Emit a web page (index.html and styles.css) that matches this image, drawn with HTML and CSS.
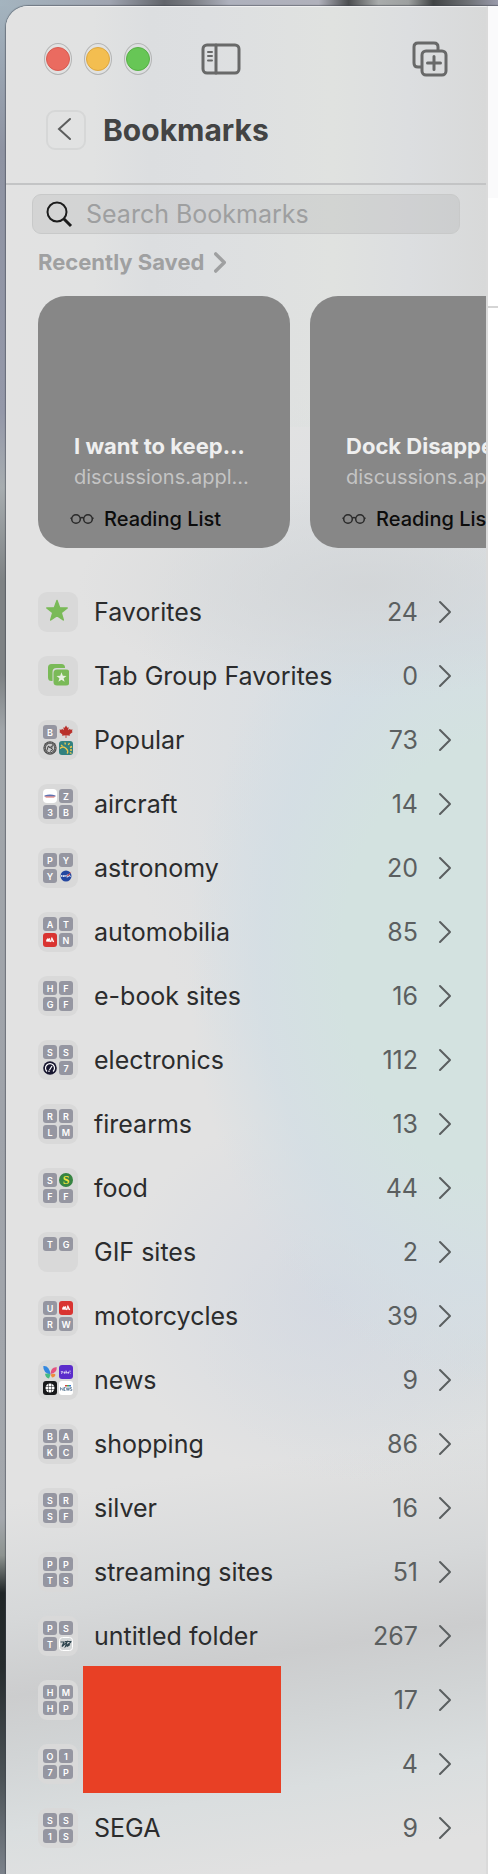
FILE: index.html
```html
<!DOCTYPE html>
<html lang="en">

<head>
  <meta charset="UTF-8">
  <meta name="viewport" content="width=device-width, initial-scale=1.0">
  <title>Bookmarks</title>
  <link rel="stylesheet" href="styles.css">
</head>

<body>
  <!-- shared icons -->
  <svg class="sprite" aria-hidden="true">
    <symbol id="chevron" viewBox="0 0 14 24"><path d="M2 2l10 10L2 22" /></symbol>
    <symbol id="glasses" viewBox="0 0 24 12">
      <circle cx="6" cy="6" r="4.3" /><circle cx="18" cy="6" r="4.3" />
      <path d="M10.2 5.2q1.8-1.2 3.6 0M.5 5l1.2.5M23.5 5l-1.2.5" />
    </symbol>
    <symbol id="ca-logo" viewBox="0 0 14 14">
      <rect width="14" height="14" rx="3" fill="#d93431" />
      <path d="M3 6.8l1.1-.5.5-1.4.9.8 1.6-.8-.4 4.1-1.8-.5-1.3.4z" fill="#fff" />
      <path d="M7.2 9l1.7-4 1.8 4M8 8h2" fill="none" stroke="#fff" stroke-width="1.1" />
    </symbol>
  </svg>

  <div class="window">
    <aside class="sidebar">
      <header class="header">
        <div class="toolbar">
          <div class="lights">
            <button class="light red" aria-label="Close"></button>
            <button class="light yellow" aria-label="Minimize"></button>
            <button class="light green" aria-label="Zoom"></button>
          </div>
          <button class="tool" aria-label="Toggle sidebar">
            <svg width="40" height="32" viewBox="0 0 40 32">
              <rect x="2" y="2" width="36" height="28" rx="4" />
              <path d="M15 2v28" />
              <path class="thin" d="M7 9h4M7 13h4M7 17.500h4" />
            </svg>
          </button>
          <button class="tool new-tab" aria-label="New tab group">
            <svg width="36" height="36" viewBox="0 0 36 36">
              <path d="M9 26H6q-4 0-4-4V6q0-4 4-4h16q4 0 4 4v3" />
              <rect x="10" y="10" width="24" height="24" rx="4" />
              <path d="M22 15.500v13M15.500 22h13" />
            </svg>
          </button>
        </div>
        <div class="title-row">
          <button class="back" aria-label="Back">
            <svg width="14" height="24" viewBox="0 0 14 24"><path d="M13 2L2 12l11 10" /></svg>
          </button>
          <h1>Bookmarks</h1>
        </div>
      </header>

      <div class="search">
        <label for="searchInput" aria-label="Search Bookmarks">
          <svg width="28" height="28" viewBox="0 0 28 28">
            <circle cx="12" cy="12" r="9.500" /><path d="M19 19l7 7" class="handle" />
          </svg>
        </label>
        <input type="text" id="searchInput" placeholder="Search Bookmarks">
      </div>

      <a href="#" class="recent-link">Recently Saved
        <svg class="chevron" width="12" height="21"><use href="#chevron" /></svg>
      </a>

      <div class="cards">
        <a href="#" class="card">
          <span class="card-title">I want to keep…</span>
          <span class="card-site">discussions.appl…</span>
          <span class="card-tag"><svg width="24" height="12"><use href="#glasses" /></svg>Reading List</span>
        </a>
        <a href="#" class="card">
          <span class="card-title">Dock Disappears</span>
          <span class="card-site">discussions.appl…</span>
          <span class="card-tag"><svg width="24" height="12"><use href="#glasses" /></svg>Reading List</span>
        </a>
      </div>

      <nav class="list">
        <a href="#" class="row">
          <span class="icon single"><svg width="24" height="24" viewBox="0 0 24 24"><path fill="#7aba58" stroke="#7aba58" stroke-width="1.500" stroke-linejoin="round" d="M12 1.500l2.600 7.200 7.600.2-6 4.700 2.100 7.400L12 16.700 5.700 21l2.100-7.400-6-4.700 7.600-.2z" /></svg></span>
          <span class="name">Favorites</span>
          <span class="count">24</span>
          <svg class="chevron" width="14" height="24"><use href="#chevron" /></svg>
        </a>
        <a href="#" class="row">
          <span class="icon single"><svg width="24" height="24" viewBox="0 0 24 24">
            <path fill="#7aba58" d="M7.500 18H6.500q-3.500 0-3.500-3.500V4.500Q3 1 6.500 1h10Q20 1 20 4.500V5h-8.500q-4 0-4 4z" />
            <rect x="8.500" y="6.500" width="16" height="16" rx="3.500" fill="#7aba58" />
            <path fill="#e8f0e3" d="M16.500 9.300l1.300 3.500 3.700.1-2.900 2.300 1 3.600-3.100-2.100-3.100 2.100 1-3.600-2.900-2.300 3.700-.1z" />
          </svg></span>
          <span class="name">Tab Group Favorites</span>
          <span class="count">0</span>
          <svg class="chevron" width="14" height="24"><use href="#chevron" /></svg>
        </a>
        <a href="#" class="row">
          <span class="icon">
            <b>B</b>
            <svg viewBox="0 0 14 14"><path fill="#b9302b" d="M7 .5l1.400 2.300 1.300-.6-.5 3 1.800-1.500.5 1 2.100-.3-.7 1.900.8.700-3.100 2.600.3 1.200-3.500-.5V13H6.600v-2.700l-3.500.5.3-1.200L.3 7l.8-.7-.7-1.900 2.100.3.5-1 1.800 1.500-.5-3 1.300.6z" /></svg>
            <svg viewBox="0 0 14 14"><circle cx="7" cy="7" r="6.700" fill="#4c4c4c" /><circle cx="7" cy="7" r="5.300" fill="none" stroke="#a8a8a8" stroke-width=".9" stroke-dasharray="1 .7" /><circle cx="7" cy="7" r="4.200" fill="#c9c9c9" /><path d="M4 9.500l1-4 2 1 2.500-2-1 3 1.500 1-3 2M5 5l4 3" fill="none" stroke="#444" stroke-width=".9" /></svg>
            <svg viewBox="0 0 14 14"><rect width="14" height="14" rx="3" fill="#328180" /><path d="M1 7.500q3-3 6 0t1 5M2 4l1.500 1M6 1.500l.3 2M10.500 2L9.300 4M13 5.500l-2 1M13 9l-2 0M12.500 12.500l-1.600-1" fill="none" stroke="#edc84e" stroke-width="1.400" /></svg>
          </span>
          <span class="name">Popular</span>
          <span class="count">73</span>
          <svg class="chevron" width="14" height="24"><use href="#chevron" /></svg>
        </a>
        <a href="#" class="row">
          <span class="icon">
            <svg viewBox="0 0 14 14"><rect width="14" height="14" rx="4" fill="#fff" /><path d="M1.500 6.500q5.500-2 11 0v1h-11z" fill="#5d72b2" /><path d="M3 8.500h8l1.500-1h-11z" fill="#d9655f" /></svg>
            <b>Z</b><b>3</b><b>B</b>
          </span>
          <span class="name">aircraft</span>
          <span class="count">14</span>
          <svg class="chevron" width="14" height="24"><use href="#chevron" /></svg>
        </a>
        <a href="#" class="row">
          <span class="icon">
            <b>P</b><b>Y</b><b>Y</b>
            <svg viewBox="0 0 14 14"><circle cx="7" cy="7" r="5.500" fill="#2447a0" /><path d="M2.500 8V6l2 2V6M5 8l1-2 1 2M9 6H7.800v1H9v1H7.500M9.500 8l1-2 1 2" fill="none" stroke="#fff" stroke-width=".7" /><path d="M12.500 2.500L7 7.500l3-1z" fill="#e2574f" /></svg>
          </span>
          <span class="name">astronomy</span>
          <span class="count">20</span>
          <svg class="chevron" width="14" height="24"><use href="#chevron" /></svg>
        </a>
        <a href="#" class="row">
          <span class="icon"><b>A</b><b>T</b><svg><use href="#ca-logo" /></svg><b>N</b></span>
          <span class="name">automobilia</span>
          <span class="count">85</span>
          <svg class="chevron" width="14" height="24"><use href="#chevron" /></svg>
        </a>
        <a href="#" class="row">
          <span class="icon"><b>H</b><b>F</b><b>G</b><b>F</b></span>
          <span class="name">e-book sites</span>
          <span class="count">16</span>
          <svg class="chevron" width="14" height="24"><use href="#chevron" /></svg>
        </a>
        <a href="#" class="row">
          <span class="icon">
            <b>S</b><b>S</b>
            <svg viewBox="0 0 14 14"><circle cx="7" cy="7" r="6.800" fill="#17162f" /><path d="M4 10.500a4.500 4.500 0 1 1 6 0M6 11V9.500M6.500 9L9 5" fill="none" stroke="#fff" stroke-width="1.200" /></svg>
            <b>7</b>
          </span>
          <span class="name">electronics</span>
          <span class="count">112</span>
          <svg class="chevron" width="14" height="24"><use href="#chevron" /></svg>
        </a>
        <a href="#" class="row">
          <span class="icon"><b>R</b><b>R</b><b>L</b><b>M</b></span>
          <span class="name">firearms</span>
          <span class="count">13</span>
          <svg class="chevron" width="14" height="24"><use href="#chevron" /></svg>
        </a>
        <a href="#" class="row">
          <span class="icon"><b>S</b><b class="dollar">S</b><b>F</b><b>F</b></span>
          <span class="name">food</span>
          <span class="count">44</span>
          <svg class="chevron" width="14" height="24"><use href="#chevron" /></svg>
        </a>
        <a href="#" class="row">
          <span class="icon"><b>T</b><b>G</b></span>
          <span class="name">GIF sites</span>
          <span class="count">2</span>
          <svg class="chevron" width="14" height="24"><use href="#chevron" /></svg>
        </a>
        <a href="#" class="row">
          <span class="icon"><b>U</b><svg><use href="#ca-logo" /></svg><b>R</b><b>W</b></span>
          <span class="name">motorcycles</span>
          <span class="count">39</span>
          <svg class="chevron" width="14" height="24"><use href="#chevron" /></svg>
        </a>
        <a href="#" class="row">
          <span class="icon">
            <svg viewBox="0 0 14 14"><path d="M.3 1q6-.8 7.200 8.500Q0 8 .3 1z" fill="#3187e0" /><path d="M2 8.800q4-1.200 5.500 1L6 13.500Q2.500 13 2 8.800z" fill="#45ba82" /><path d="M7.500 9Q8 1.500 13.800 2.300 14 8 7.500 9z" fill="#e5507f" /><path d="M7.500 9.500q4.500-1.500 5 .5-1 2.500-3.500 2.500z" fill="#ee8b3c" /></svg>
            <svg viewBox="0 0 14 14"><rect width="14" height="14" rx="3" fill="#5b2ccb" /><path d="M2 6l1 1.500L4 6M3 7.500L2.500 9M5 7h1v1.200H5zM7 5.500v3M7 7h1v1.500M9 7h.8v1.200H9zM11 5.500v1.700M11.500 8.500h.5" fill="none" stroke="#fff" stroke-width=".7" /></svg>
            <svg viewBox="0 0 14 14"><rect width="14" height="14" rx="3" fill="#17181a" /><circle cx="7" cy="7" r="4.500" fill="#fff" /><path d="M5.500 2v10M8.500 2v10M2 5.500h10M2 8.500h10" stroke="#17181a" stroke-width=".5" /></svg>
            <svg viewBox="0 0 14 14"><rect width="14" height="14" rx="3" fill="#fff" /><path d="M6 4h2v1.500H6z" fill="#d9423c" /><path d="M8 4h2v1.500H8z" fill="#48a557" /><path d="M10 4h2v1.500h-2z" fill="#3577ca" /><path d="M1.500 9.500v-3l2.500 3v-3M6.500 6.500H5v3h1.500M5 8h1M7.300 6.500l.8 3 .9-3 .8 3 .8-3M12.800 6.500h-1.300V8h1.300v1.500h-1.500" fill="none" stroke="#466786" stroke-width=".7" /></svg>
          </span>
          <span class="name">news</span>
          <span class="count">9</span>
          <svg class="chevron" width="14" height="24"><use href="#chevron" /></svg>
        </a>
        <a href="#" class="row">
          <span class="icon"><b>B</b><b>A</b><b>K</b><b>C</b></span>
          <span class="name">shopping</span>
          <span class="count">86</span>
          <svg class="chevron" width="14" height="24"><use href="#chevron" /></svg>
        </a>
        <a href="#" class="row">
          <span class="icon"><b>S</b><b>R</b><b>S</b><b>F</b></span>
          <span class="name">silver</span>
          <span class="count">16</span>
          <svg class="chevron" width="14" height="24"><use href="#chevron" /></svg>
        </a>
        <a href="#" class="row">
          <span class="icon"><b>P</b><b>P</b><b>T</b><b>S</b></span>
          <span class="name">streaming sites</span>
          <span class="count">51</span>
          <svg class="chevron" width="14" height="24"><use href="#chevron" /></svg>
        </a>
        <a href="#" class="row">
          <span class="icon">
            <b>P</b><b>S</b><b>T</b>
            <svg viewBox="0 0 14 14"><rect x=".5" y=".5" width="13" height="13" rx="3" fill="#d4d7d8" stroke="#fff" /><path d="M1.500 5h3.500l-2 4.500L8 5 6.500 9.500 12 5M6 4.500h6.500M8 9.500l3-2" fill="none" stroke="#2f4650" stroke-width="1.200" /></svg>
          </span>
          <span class="name">untitled folder</span>
          <span class="count">267</span>
          <svg class="chevron" width="14" height="24"><use href="#chevron" /></svg>
        </a>
        <!-- names of these two folders are covered -->
        <a href="#" class="row covered">
          <span class="icon"><b>H</b><b>M</b><b>H</b><b>P</b></span>
          <span class="name"></span>
          <span class="count">17</span>
          <svg class="chevron" width="14" height="24"><use href="#chevron" /></svg>
          <span class="cover"></span>
        </a>
        <a href="#" class="row">
          <span class="icon"><b>O</b><b>1</b><b>7</b><b>P</b></span>
          <span class="name"></span>
          <span class="count">4</span>
          <svg class="chevron" width="14" height="24"><use href="#chevron" /></svg>
        </a>
        <a href="#" class="row">
          <span class="icon"><b>S</b><b>S</b><b>1</b><b>S</b></span>
          <span class="name">SEGA</span>
          <span class="count">9</span>
          <svg class="chevron" width="14" height="24"><use href="#chevron" /></svg>
        </a>
      </nav>
    </aside>
    <main class="page">
      <div class="page-bar"></div>
      <div class="page-tabs"></div>
    </main>
  </div>
</body>

</html>
```
FILE: styles.css
```css
*,
*::before {
  box-sizing: border-box;
}

body {
  margin: 0;
  min-height: 100vh;
  padding: 6px 0 0 6px;
  display: flex;
  font-family: Inter, "Liberation Sans", sans-serif;
  color: #2b2c2d;
  background:
    linear-gradient(90deg, #a4b4bf 0, #9fa4b0 22%, #62656b 33%, #777a80 38%, #aeb1bd 46%, #b0b1bb 64%, #4c4e50 70%, #a9acac 76%, #9da0a0 82%, #414445 87%, #6e7175 94%, #9a9bab 100%) 0 0 / 100% 6px no-repeat,
    linear-gradient(#a4b4bf 0, #8e93a2 8%, #9498a9 22%, #a7adb0 26%, #7e8284 31%, #7e8284 36%, #a1a6aa 39%, #9fa3aa 60%, #a4a8ad 81%, #8d9390 83%, #1f2526 85%, #262c2e 89%, #4c5357 95%, #7b828b 100%);
}

a {
  color: inherit;
  text-decoration: none;
}

button {
  padding: 0;
  border: none;
  background: none;
}

svg {
  display: block;
  fill: none;
  flex: none;
}

.sprite {
  position: absolute;
  width: 0;
  height: 0;
}

.window {
  flex: 1;
  min-width: 0;
  display: flex;
  border-radius: 22px 0 0 0;
  overflow: hidden;
  box-shadow: 0 0 1px 1px rgba(60, 65, 75, 0.5);
}

.sidebar {
  flex: 1;
  min-width: 0;
  overflow: hidden;
  border-top: 1px solid #f0f0f0;
  border-right: 2px solid #dadada;
  background:
    radial-gradient(ellipse 60% 6% at 75% 31%, rgba(210, 213, 215, 0.9), transparent),
    radial-gradient(ellipse 64% 23% at 102% 51%, #d3e2e0 50%, rgba(211, 222, 228, 0.8) 76%, transparent),
    radial-gradient(ellipse 50% 20% at 75% 40%, rgba(211, 220, 228, 0.8), transparent),
    radial-gradient(ellipse 45% 10% at 68% 69%, rgba(210, 216, 226, 0.8), transparent),
    radial-gradient(ellipse 60% 8% at 100% 72%, rgba(214, 220, 222, 0.8), transparent),
    linear-gradient(171deg, transparent 77%, #d6d8d9 83%, #cccdce 87%, #d1d4d5 90%, #dadedf 94%, #e1e1e1 98%),
    linear-gradient(90deg, #e2e2e2 0, #e1e2e2 18%, #dcdee0 30%, #dddfe1 42%, #e0e2e0 68%, #dcdee0 84%, #d8d9d9 100%) 0 0 / 100% 420px no-repeat,
    #e2e2e2;
}

.header {
  height: 178px;
  border-bottom: 2px solid #c3c4c5;
}

.toolbar {
  display: flex;
  align-items: center;
  height: 103px;
  padding: 0 38px;
}

.lights {
  display: flex;
  gap: 12px;
  margin-right: 49px;
}

.light {
  display: flex;
  align-items: center;
  justify-content: center;
  width: 28px;
  height: 32px;
  border: 1px solid #b4b5b5;
  border-radius: 50%;
}

.light::before {
  content: "";
  flex: none;
  width: 24px;
  height: 24px;
  border-radius: 50%;
  background: #ea6b60;
  border: 1px solid #d95b50;
}

.light.yellow::before {
  background: #f3be50;
  border-color: #dda73e;
}

.light.green::before {
  background: #67c656;
  border-color: #56b044;
}

.tool svg {
  stroke: #686969;
  stroke-width: 3;
  stroke-linecap: round;
}

.tool .thin {
  stroke-width: 2;
}

.new-tab {
  margin-left: auto;
}

.title-row {
  display: flex;
  align-items: center;
  gap: 17px;
  padding-left: 40px;
}

.back {
  display: flex;
  align-items: center;
  justify-content: center;
  width: 40px;
  height: 40px;
  padding: 0 4px 2px 0;
  border: 2px solid #d6d7d7;
  border-radius: 9px;
}

.back svg {
  stroke: #5c5d5d;
  stroke-width: 2;
  stroke-linecap: round;
}

h1 {
  margin: 0;
  font-size: 30px;
  line-height: 40px;
  color: #434444;
}

.search {
  display: flex;
  align-items: center;
  gap: 13px;
  height: 40px;
  margin: 9px 26px 0;
  padding: 0 12px;
  background: rgba(0, 0, 0, 0.06);
  border: 1px solid #c8c9c9;
  border-radius: 9px;
}

.search svg {
  stroke: #1c1c1c;
  stroke-width: 2;
}

.search .handle {
  stroke-width: 3;
}

.search input {
  flex: 1;
  min-width: 0;
  padding: 0;
  border: none;
  outline: none;
  background: none;
  font: 25px Inter, "Liberation Sans", sans-serif;
}

.search input::placeholder {
  color: #9e9fa0;
}

.recent-link {
  display: flex;
  align-items: center;
  gap: 10px;
  padding: 12px 32px 18px;
  font-size: 22px;
  font-weight: 700;
  line-height: 32px;
  color: #9fa0a1;
}

.chevron {
  stroke: #5b5f60;
  stroke-width: 2;
  stroke-linecap: round;
  stroke-linejoin: round;
}

.recent-link .chevron {
  stroke: #9fa0a1;
  stroke-width: 4;
}

.cards {
  display: flex;
  gap: 20px;
  padding-left: 32px;
}

.card {
  display: flex;
  flex: none;
  flex-direction: column;
  justify-content: flex-end;
  width: 252px;
  height: 252px;
  padding: 0 36px 13px;
  border-radius: 28px;
  background: #878787;
  white-space: nowrap;
}

.card-title {
  font-size: 22px;
  font-weight: 700;
  line-height: 32px;
  color: #efefef;
}

.card-site {
  font-size: 20px;
  line-height: 30px;
  color: #c4c4c4;
}

.card-tag {
  display: flex;
  align-items: center;
  gap: 10px;
  margin: 11px 0 0 -4px;
  font-size: 20px;
  font-weight: 500;
  line-height: 32px;
  color: #0c0c0c;
}

.card-tag svg {
  stroke: #2a2a2a;
  stroke-width: 1.5;
}

.list {
  padding: 32px 0 14px;
}

.row {
  display: flex;
  align-items: center;
  height: 64px;
  padding: 0 34px 0 32px;
  font-size: 25px;
}

.icon {
  display: grid;
  grid-template-columns: 14px 14px;
  grid-template-rows: 14px 14px;
  gap: 2px;
  width: 40px;
  height: 40px;
  padding: 5px;
  border-radius: 9px;
  background: #d9d9d9;
}

.icon.single {
  display: flex;
  padding: 7px;
}

.icon:not(.single) svg {
  width: 14px;
  height: 14px;
}

.icon b {
  border-radius: 3px;
  background: #9596a1;
  color: #fff;
  font-size: 9px;
  font-weight: 600;
  line-height: 15px;
  text-align: center;
}

.icon .dollar {
  border-radius: 50%;
  background: #378442;
  color: #f3e63c;
  font: bold 12px/14px "Liberation Serif", serif;
}

.name {
  flex: 1;
  padding-left: 16px;
  white-space: nowrap;
}

.count {
  padding: 0 20px;
  color: #5b5f60;
}

.covered {
  position: relative;
}

/* block over the names, two rows tall */
.cover {
  position: absolute;
  top: -2px;
  left: 77px;
  width: 198px;
  height: 127px;
  background: #e84025;
}

.page {
  width: 10px;
  background: #fff;
}

.page-bar {
  height: 192px;
  background: #fafafb;
}

.page-tabs {
  height: 110px;
  border-bottom: 2px solid #d5d5d5;
}
```
